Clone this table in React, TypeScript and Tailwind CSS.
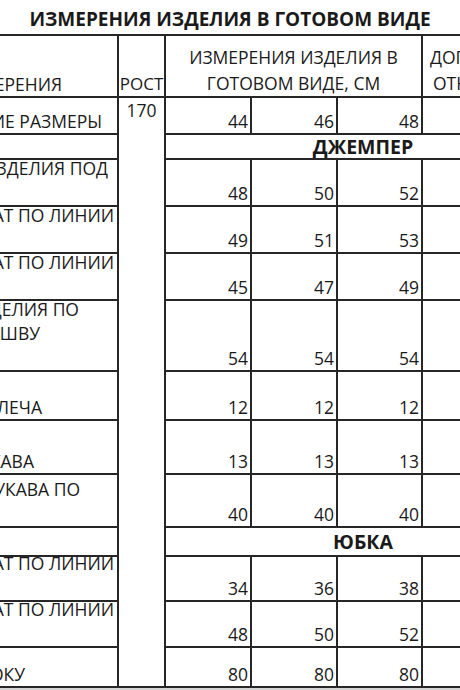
import React from 'react';

type Line = { text?: string; cls?: string };

type Row =
  | { kind: 'data'; h: string; lines: Line[]; values: string[] }
  | { kind: 'section'; h: string; title: string };

const rows: Row[] = [
  { kind: 'section', h: 'h-[25px]', title: 'ДЖЕМПЕР' },
  {
    kind: 'data',
    h: 'h-[47px]',
    lines: [{ text: 'ОБХВАТ ИЗДЕЛИЯ ПОД', cls: 'pr-[9px]' }, {}],
    values: ['48', '50', '52'],
  },
  {
    kind: 'data',
    h: 'h-[47px]',
    lines: [{ text: 'ОБХВАТ ПО ЛИНИИ', cls: 'pr-[3px]' }, {}],
    values: ['49', '51', '53'],
  },
  {
    kind: 'data',
    h: 'h-[47px]',
    lines: [{ text: 'ОБХВАТ ПО ЛИНИИ', cls: 'pr-[3px]' }, {}],
    values: ['45', '47', '49'],
  },
  {
    kind: 'data',
    h: 'h-[71px]',
    lines: [
      { text: 'ДЛИНА ИЗДЕЛИЯ ПО', cls: 'pr-[38px]' },
      { text: 'ЦЕНТРАЛЬНОМУ ШВУ', cls: 'pr-[77px]' },
      {},
    ],
    values: ['54', '54', '54'],
  },
  {
    kind: 'data',
    h: 'h-[49px]',
    lines: [{ text: 'ДЛИНА ПЛЕЧА', cls: 'pr-[75px]' }],
    values: ['12', '12', '12'],
  },
  {
    kind: 'data',
    h: 'h-[54px]',
    lines: [{ text: 'ДЛИНА РУКАВА', cls: 'pr-[83px]' }],
    values: ['13', '13', '13'],
  },
  {
    kind: 'data',
    h: 'h-[53px]',
    lines: [{ text: 'ДЛИНА РУКАВА ПО', cls: 'pr-[37px]' }, {}],
    values: ['40', '40', '40'],
  },
  { kind: 'section', h: 'h-[29px]', title: 'ЮБКА' },
  {
    kind: 'data',
    h: 'h-[45px]',
    lines: [{ text: 'ОБХВАТ ПО ЛИНИИ', cls: 'pr-[3px]' }, {}],
    values: ['34', '36', '38'],
  },
  {
    kind: 'data',
    h: 'h-[46px]',
    lines: [{ text: 'ОБХВАТ ПО ЛИНИИ', cls: 'pr-[3px]' }, {}],
    values: ['48', '50', '52'],
  },
  {
    kind: 'data',
    h: 'h-[40px]',
    lines: [{ text: 'ДЛИНА ПО БОКУ', cls: 'pr-[92px]' }],
    values: ['80', '80', '80'],
  },
];

const cell = 'border-2 border-[#262626] p-0';

// label lines are bottom-aligned and may run past the top of the row, like wrapped text in the sheet
const LabelCell = ({ lines }: { lines: Line[] }) => (
  <td className={`${cell} align-bottom`}>
    <div className="flex flex-col justify-end h-[22px]">
      {lines.map((l, i) =>
        l.text ? (
          <div
            key={i}
            className={`flex justify-end shrink-0 whitespace-nowrap h-[24.5px] ${l.cls}`}
          >
            <span>{l.text}</span>
          </div>
        ) : (
          <div key={i} className="shrink-0 h-[24.5px]" />
        ),
      )}
    </div>
  </td>
);

const ValueCell = ({ value }: { value: string }) => (
  <td className={`${cell} align-bottom text-right pr-[2px]`}>{value}</td>
);

export default function App() {
  return (
    <div className="w-[460px] h-[690px] overflow-hidden bg-white text-[#1a1a1a] font-['Open_Sans',sans-serif] text-[17.5px] leading-[24.5px]">
      <div className="h-[34px] pt-[4px] text-center text-[19px] leading-[30px] font-bold">
        ИЗМЕРЕНИЯ ИЗДЕЛИЯ В ГОТОВОМ ВИДЕ
      </div>
      <table className="table-fixed border-collapse w-[563px] ml-[-3px]">
        <colgroup>
          <col className="w-[120px]" />
          <col className="w-[47px]" />
          <col className="w-[86px]" />
          <col className="w-[86px]" />
          <col className="w-[85px]" />
          <col className="w-[139px]" />
        </colgroup>
        <tbody>
          <tr className="h-[62px]">
            <LabelCell lines={[{ text: 'ИЗМЕРЕНИЯ', cls: 'pr-[55px]' }]} />
            <td className={`${cell} align-bottom text-center text-[17px]`}>РОСТ</td>
            <td
              colSpan={3}
              className={`${cell} align-bottom text-center leading-[25.5px]`}
            >
              ИЗМЕРЕНИЯ ИЗДЕЛИЯ В
              <br />
              ГОТОВОМ ВИДЕ, СМ
            </td>
            <td className={`${cell} align-bottom leading-[25.5px] whitespace-nowrap`}>
              <div className="pl-[7px]">ДОПУСТИМЫЕ</div>
              <div className="pl-[10px]">ОТНОСИТЕЛЬНО</div>
            </td>
          </tr>
          <tr className="h-[37px]">
            <LabelCell lines={[{ text: 'РОССИЙСКИЕ РАЗМЕРЫ', cls: 'pr-[15px]' }]} />
            <td rowSpan={13} className={`${cell} align-top text-center`}>
              170
            </td>
            <ValueCell value="44" />
            <ValueCell value="46" />
            <ValueCell value="48" />
            <td className={cell} />
          </tr>
          {rows.map((r, i) =>
            r.kind === 'section' ? (
              <tr key={i} className={r.h}>
                <td className={cell} />
                <td
                  colSpan={4}
                  className={`${cell} align-middle text-center font-bold text-[19.5px] leading-[21px]`}
                >
                  {r.title}
                </td>
              </tr>
            ) : (
              <tr key={i} className={r.h}>
                <LabelCell lines={r.lines} />
                {r.values.map((v, j) => (
                  <ValueCell key={j} value={v} />
                ))}
                <td className={cell} />
              </tr>
            ),
          )}
        </tbody>
      </table>
      <div className="h-[4px] bg-[#d4d4d4]" />
    </div>
  );
}
